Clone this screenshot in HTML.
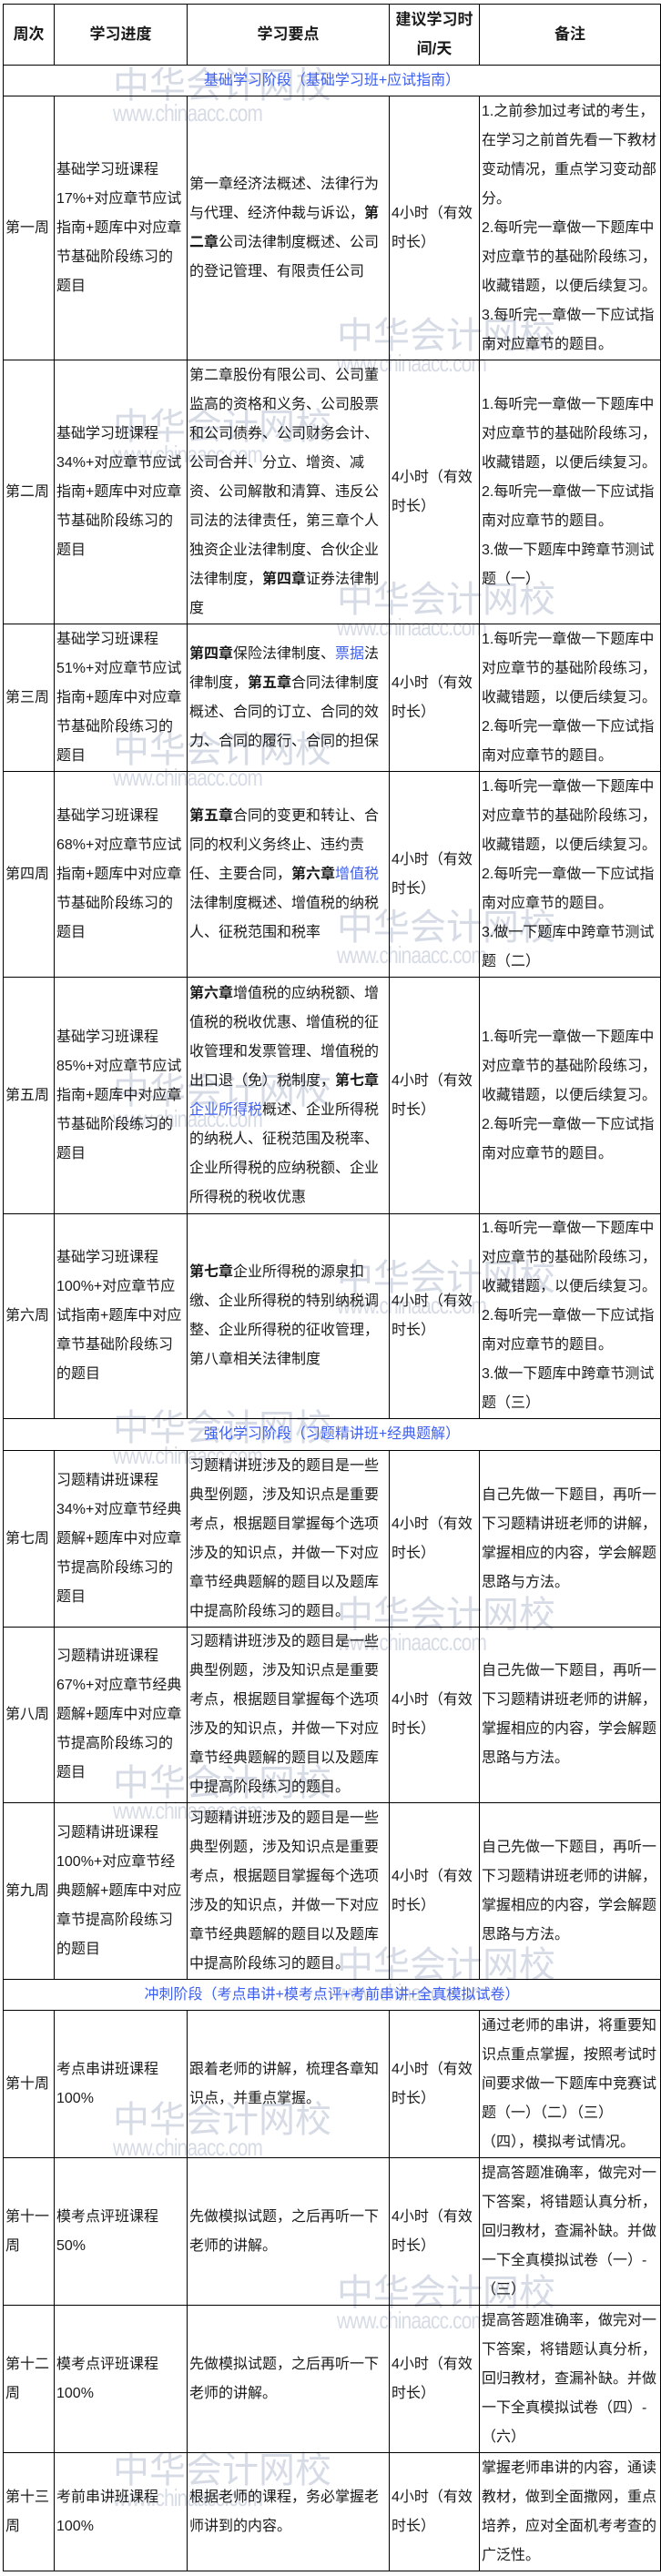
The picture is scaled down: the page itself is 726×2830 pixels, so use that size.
<!DOCTYPE html>
<html><head><meta charset="utf-8"><style>
html,body{margin:0;padding:0;background:#fff;width:726px;height:2830px;overflow:hidden;position:relative}
table{position:absolute;left:3px;top:4px;border-collapse:collapse;table-layout:fixed;width:722px;font-family:"Liberation Sans","Noto Sans CJK SC",sans-serif;font-size:16px;color:#1a1a1a;z-index:2}
td{border:1px solid #000;padding:0 0 0 2px;line-height:32px;vertical-align:middle;white-space:nowrap;overflow:hidden}
th{border:1px solid #000;font-weight:bold;line-height:32px;font-size:17px}
.sec td{text-align:center;color:#3d5ff0;padding:0}
b{font-weight:bold}
.bl{color:#3d5ff0}
.wm{position:absolute;z-index:1;color:#d6dbe5;font-family:"Noto Sans CJK SC",sans-serif;font-size:40px;line-height:40px;white-space:nowrap}
.wm span{display:block;font-family:"Liberation Sans",sans-serif;font-size:26px;line-height:28px;letter-spacing:-1px;transform:scaleX(0.8);transform-origin:left}
</style></head><body>
<div class="wm" style="left:124px;top:70px">中华会计网校<span>www.chinaacc.com</span></div>
<div class="wm" style="left:370px;top:345px">中华会计网校<span>www.chinaacc.com</span></div>
<div class="wm" style="left:124px;top:445px">中华会计网校<span>www.chinaacc.com</span></div>
<div class="wm" style="left:370px;top:635px">中华会计网校<span>www.chinaacc.com</span></div>
<div class="wm" style="left:124px;top:800px">中华会计网校<span>www.chinaacc.com</span></div>
<div class="wm" style="left:370px;top:995px">中华会计网校<span>www.chinaacc.com</span></div>
<div class="wm" style="left:124px;top:1175px">中华会计网校<span>www.chinaacc.com</span></div>
<div class="wm" style="left:370px;top:1380px">中华会计网校<span>www.chinaacc.com</span></div>
<div class="wm" style="left:124px;top:1545px">中华会计网校<span>www.chinaacc.com</span></div>
<div class="wm" style="left:370px;top:1750px">中华会计网校<span>www.chinaacc.com</span></div>
<div class="wm" style="left:124px;top:1935px">中华会计网校<span>www.chinaacc.com</span></div>
<div class="wm" style="left:370px;top:2135px">中华会计网校<span>www.chinaacc.com</span></div>
<div class="wm" style="left:124px;top:2305px">中华会计网校<span>www.chinaacc.com</span></div>
<div class="wm" style="left:370px;top:2495px">中华会计网校<span>www.chinaacc.com</span></div>
<div class="wm" style="left:124px;top:2690px">中华会计网校<span>www.chinaacc.com</span></div>
<table>
<colgroup><col style="width:56px"><col style="width:146px"><col style="width:222px"><col style="width:99px"><col style="width:199px"></colgroup>
<tr style="height:66px"><th>周次</th><th>学习进度</th><th>学习要点</th><th>建议学习时<br>间/天</th><th>备注</th></tr>
<tr class="sec" style="height:34px"><td colspan="5">基础学习阶段（基础学习班+应试指南）</td></tr>
<tr style="height:290px"><td>第一周</td><td>基础学习班课程<br>17%+对应章节应试<br>指南+题库中对应章<br>节基础阶段练习的<br>题目</td><td>第一章经济法概述、法律行为<br>与代理、经济仲裁与诉讼，<b>第</b><br><b>二章</b>公司法律制度概述、公司<br>的登记管理、有限责任公司</td><td>4小时（有效<br>时长）</td><td>1.之前参加过考试的考生，<br>在学习之前首先看一下教材<br>变动情况，重点学习变动部<br>分。<br>2.每听完一章做一下题库中<br>对应章节的基础阶段练习，<br>收藏错题，以便后续复习。<br>3.每听完一章做一下应试指<br>南对应章节的题目。</td></tr>
<tr style="height:290px"><td>第二周</td><td>基础学习班课程<br>34%+对应章节应试<br>指南+题库中对应章<br>节基础阶段练习的<br>题目</td><td>第二章股份有限公司、公司董<br>监高的资格和义务、公司股票<br>和公司债券、公司财务会计、<br>公司合并、分立、增资、减<br>资、公司解散和清算、违反公<br>司法的法律责任，第三章个人<br>独资企业法律制度、合伙企业<br>法律制度，<b>第四章</b>证券法律制<br>度</td><td>4小时（有效<br>时长）</td><td>1.每听完一章做一下题库中<br>对应章节的基础阶段练习，<br>收藏错题，以便后续复习。<br>2.每听完一章做一下应试指<br>南对应章节的题目。<br>3.做一下题库中跨章节测试<br>题（一）</td></tr>
<tr style="height:162px"><td>第三周</td><td>基础学习班课程<br>51%+对应章节应试<br>指南+题库中对应章<br>节基础阶段练习的<br>题目</td><td><b>第四章</b>保险法律制度、<span class="bl">票据</span>法<br>律制度，<b>第五章</b>合同法律制度<br>概述、合同的订立、合同的效<br>力、合同的履行、合同的担保</td><td>4小时（有效<br>时长）</td><td>1.每听完一章做一下题库中<br>对应章节的基础阶段练习，<br>收藏错题，以便后续复习。<br>2.每听完一章做一下应试指<br>南对应章节的题目。</td></tr>
<tr style="height:226px"><td>第四周</td><td>基础学习班课程<br>68%+对应章节应试<br>指南+题库中对应章<br>节基础阶段练习的<br>题目</td><td><b>第五章</b>合同的变更和转让、合<br>同的权利义务终止、违约责<br>任、主要合同，<b>第六章</b><span class="bl">增值税</span><br>法律制度概述、增值税的纳税<br>人、征税范围和税率</td><td>4小时（有效<br>时长）</td><td>1.每听完一章做一下题库中<br>对应章节的基础阶段练习，<br>收藏错题，以便后续复习。<br>2.每听完一章做一下应试指<br>南对应章节的题目。<br>3.做一下题库中跨章节测试<br>题（二）</td></tr>
<tr style="height:260px"><td>第五周</td><td>基础学习班课程<br>85%+对应章节应试<br>指南+题库中对应章<br>节基础阶段练习的<br>题目</td><td><b>第六章</b>增值税的应纳税额、增<br>值税的税收优惠、增值税的征<br>收管理和发票管理、增值税的<br>出口退（免）税制度，<b>第七章</b><br><span class="bl">企业所得税</span>概述、企业所得税<br>的纳税人、征税范围及税率、<br>企业所得税的应纳税额、企业<br>所得税的税收优惠</td><td>4小时（有效<br>时长）</td><td>1.每听完一章做一下题库中<br>对应章节的基础阶段练习，<br>收藏错题，以便后续复习。<br>2.每听完一章做一下应试指<br>南对应章节的题目。</td></tr>
<tr style="height:225px"><td>第六周</td><td>基础学习班课程<br>100%+对应章节应<br>试指南+题库中对应<br>章节基础阶段练习<br>的题目</td><td><b>第七章</b>企业所得税的源泉扣<br>缴、企业所得税的特别纳税调<br>整、企业所得税的征收管理，<br>第八章相关法律制度</td><td>4小时（有效<br>时长）</td><td>1.每听完一章做一下题库中<br>对应章节的基础阶段练习，<br>收藏错题，以便后续复习。<br>2.每听完一章做一下应试指<br>南对应章节的题目。<br>3.做一下题库中跨章节测试<br>题（三）</td></tr>
<tr class="sec" style="height:35px"><td colspan="5">强化学习阶段（习题精讲班+经典题解）</td></tr>
<tr style="height:194px"><td>第七周</td><td>习题精讲班课程<br>34%+对应章节经典<br>题解+题库中对应章<br>节提高阶段练习的<br>题目</td><td>习题精讲班涉及的题目是一些<br>典型例题，涉及知识点是重要<br>考点，根据题目掌握每个选项<br>涉及的知识点，并做一下对应<br>章节经典题解的题目以及题库<br>中提高阶段练习的题目。</td><td>4小时（有效<br>时长）</td><td>自己先做一下题目，再听一<br>下习题精讲班老师的讲解，<br>掌握相应的内容，学会解题<br>思路与方法。</td></tr>
<tr style="height:193px"><td>第八周</td><td>习题精讲班课程<br>67%+对应章节经典<br>题解+题库中对应章<br>节提高阶段练习的<br>题目</td><td>习题精讲班涉及的题目是一些<br>典型例题，涉及知识点是重要<br>考点，根据题目掌握每个选项<br>涉及的知识点，并做一下对应<br>章节经典题解的题目以及题库<br>中提高阶段练习的题目。</td><td>4小时（有效<br>时长）</td><td>自己先做一下题目，再听一<br>下习题精讲班老师的讲解，<br>掌握相应的内容，学会解题<br>思路与方法。</td></tr>
<tr style="height:194px"><td>第九周</td><td>习题精讲班课程<br>100%+对应章节经<br>典题解+题库中对应<br>章节提高阶段练习<br>的题目</td><td>习题精讲班涉及的题目是一些<br>典型例题，涉及知识点是重要<br>考点，根据题目掌握每个选项<br>涉及的知识点，并做一下对应<br>章节经典题解的题目以及题库<br>中提高阶段练习的题目。</td><td>4小时（有效<br>时长）</td><td>自己先做一下题目，再听一<br>下习题精讲班老师的讲解，<br>掌握相应的内容，学会解题<br>思路与方法。</td></tr>
<tr class="sec" style="height:34px"><td colspan="5">冲刺阶段（考点串讲+模考点评+考前串讲+全真模拟试卷）</td></tr>
<tr style="height:162px"><td>第十周</td><td>考点串讲班课程<br>100%</td><td>跟着老师的讲解，梳理各章知<br>识点，并重点掌握。</td><td>4小时（有效<br>时长）</td><td>通过老师的串讲，将重要知<br>识点重点掌握，按照考试时<br>间要求做一下题库中竞赛试<br>题（一）（二）（三）<br>（四），模拟考试情况。</td></tr>
<tr style="height:162px"><td>第十一<br>周</td><td>模考点评班课程<br>50%</td><td>先做模拟试题，之后再听一下<br>老师的讲解。</td><td>4小时（有效<br>时长）</td><td>提高答题准确率，做完对一<br>下答案，将错题认真分析，<br>回归教材，查漏补缺。并做<br>一下全真模拟试卷（一）-<br>（三）</td></tr>
<tr style="height:162px"><td>第十二<br>周</td><td>模考点评班课程<br>100%</td><td>先做模拟试题，之后再听一下<br>老师的讲解。</td><td>4小时（有效<br>时长）</td><td>提高答题准确率，做完对一<br>下答案，将错题认真分析，<br>回归教材，查漏补缺。并做<br>一下全真模拟试卷（四）-<br>（六）</td></tr>
<tr style="height:130px"><td>第十三<br>周</td><td>考前串讲班课程<br>100%</td><td>根据老师的课程，务必掌握老<br>师讲到的内容。</td><td>4小时（有效<br>时长）</td><td>掌握老师串讲的内容，通读<br>教材，做到全面撒网，重点<br>培养，应对全面机考考查的<br>广泛性。</td></tr>
</table>
</body></html>
